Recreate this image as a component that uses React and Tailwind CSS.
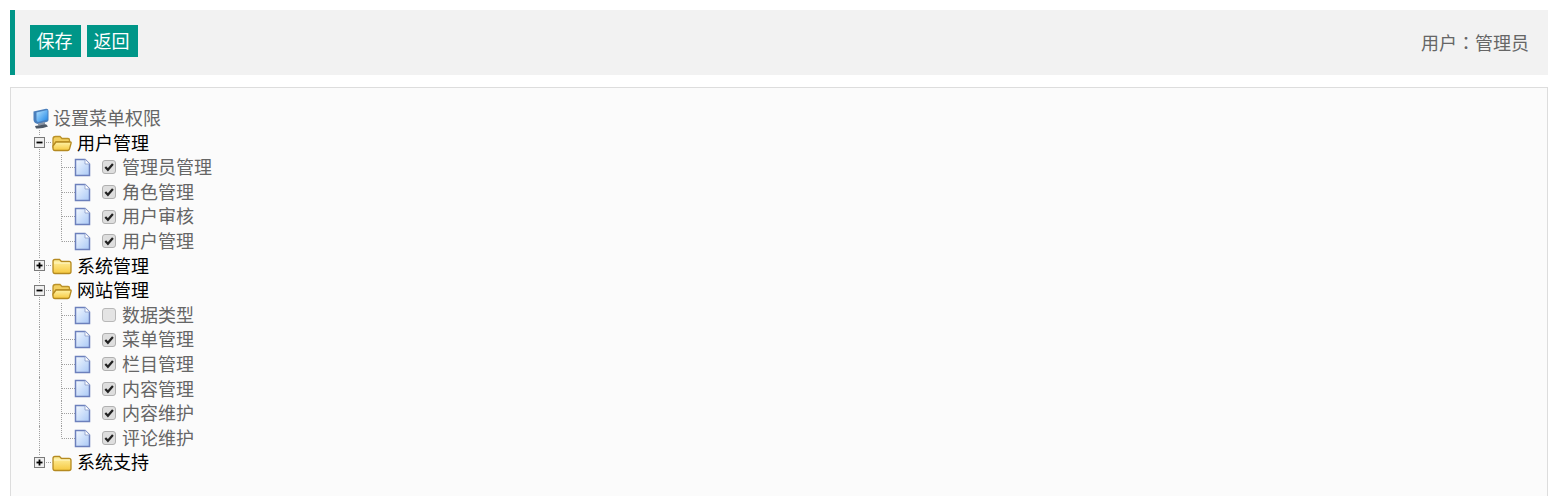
import React from "react";

const tree = [
  {
    name: "用户管理",
    open: true,
    items: [
      ["管理员管理", true],
      ["角色管理", true],
      ["用户审核", true],
      ["用户管理", true],
    ],
  },
  { name: "系统管理", open: false, items: [] },
  {
    name: "网站管理",
    open: true,
    items: [
      ["数据类型", false],
      ["菜单管理", true],
      ["栏目管理", true],
      ["内容管理", true],
      ["内容维护", true],
      ["评论维护", true],
    ],
  },
  { name: "系统支持", open: false, items: [] },
];

const DOT = "#a0a0a0";

function RootIcon() {
  return (
    <svg width="16" height="21" viewBox="0 0 16 21" className="shrink-0">
      <defs>
        <linearGradient id="screen" x1="0" y1="0" x2="1" y2="1">
          <stop offset="0" stopColor="#b4e2ff" />
          <stop offset="1" stopColor="#1f86e6" />
        </linearGradient>
      </defs>
      <path d="M0.5 3.5 L13 0.8 Q15.5 0.5 15.5 3 L15.5 12 Q15.5 13.5 13.5 14 L5 16 Q1 15.5 0.5 12Z" fill="#4a7fbc" />
      <path d="M3.5 4.5 L14.5 2 L14.5 11.5 L5 14 Q3.5 13.5 3.5 12Z" fill="url(#screen)" />
      <path d="M5 15.5 L12 14 L12 17 L5 17.5Z" fill="#8995a6" />
      <path d="M2 18 L13 16.3 L15 18.5 Q9 21 3 20.5 Z" fill="#4d5866" />
    </svg>
  );
}

function Switch({ open, last }) {
  return (
    <svg width="18" height="25" viewBox="0 0 18 25" className="shrink-0">
      <path d="M6.5 0V6" stroke={DOT} strokeDasharray="1 1" fill="none" />
      {!last && <path d="M6.5 19V25" stroke={DOT} strokeDasharray="1 1" fill="none" />}
      <path d="M13 12.5H18" stroke={DOT} strokeDasharray="1 1" fill="none" />
      <rect x="1.5" y="7.5" width="10" height="10" fill="#efefef" stroke="#7a7a7a" />
      <path d="M3.5 12.5H9.5" stroke="#000" strokeWidth="1.8" />
      {!open && <path d="M6.5 9.5V15.5" stroke="#000" strokeWidth="1.8" />}
    </svg>
  );
}

function Folder({ open, id }) {
  return (
    <svg width="21" height="19" viewBox="0 0 21 19" className="shrink-0">
      <defs>
        <linearGradient id={`f${id}`} x1="0" y1="0" x2="0" y2="1">
          <stop offset="0" stopColor="#fff3a8" />
          <stop offset="1" stopColor="#f6c83e" />
        </linearGradient>
      </defs>
      {open ? (
        <>
          <path d="M2 6 Q2 3.5 4.5 3.5 L9 3.5 L11 5.5 L17 5.5 Q18.5 5.5 18.5 7 L18.5 9 L5 9 L2 13Z" fill="#f2cf60" stroke="#bb9228" strokeWidth="1.3" />
          <path d="M5 9 H19.5 Q20.5 9 20 10.5 L18.5 16 Q18 17.5 16.5 17.5 H4 Q2 17.5 2 15.5 L2 13 Z" fill={`url(#f${id})`} stroke="#b58a20" strokeWidth="1.3" />
        </>
      ) : (
        <>
          <path d="M2 5.5 Q2 3.5 4 3.5 L8.5 3.5 L10.5 5.5 L18 5.5 Q20 5.5 20 7.5 L20 15.5 Q20 17.5 18 17.5 L4 17.5 Q2 17.5 2 15.5Z" fill={`url(#f${id})`} stroke="#b58a20" strokeWidth="1.3" />
          <path d="M3 7 H19" stroke="#fff8c8" />
        </>
      )}
    </svg>
  );
}

function Leaf({ last, id }) {
  return (
    <svg width="30" height="25" viewBox="0 0 30 25" className="shrink-0">
      <defs>
        <linearGradient id={`p${id}`} x1="0" y1="0" x2="1" y2="1">
          <stop offset="0" stopColor="#f4f9ff" />
          <stop offset="1" stopColor="#a9c8f6" />
        </linearGradient>
      </defs>
      <path d={last ? "M0.5 0V12.5" : "M0.5 0V25"} stroke={DOT} strokeDasharray="1 1" fill="none" />
      <path d="M1 12.5H14" stroke={DOT} strokeDasharray="1 1" fill="none" />
      <path d="M14.5 4.5H24L28.5 9V20.5H14.5Z" fill={`url(#p${id})`} stroke="#6c80bc" strokeWidth="1.5" />
      <path d="M24 4.5V9H28.5" fill="#fff" stroke="#9aaad2" />
    </svg>
  );
}

function Check({ on }) {
  return (
    <span
      className={`flex h-[14px] w-[14px] shrink-0 items-center justify-center rounded-[3px] border ${
        on ? "border-[#b0b0b0] bg-[#dedede]" : "border-[#b8b8b8] bg-[#e4e4e4]"
      }`}
    >
      {on && (
        <svg width="10" height="10" viewBox="0 0 10 10">
          <path d="M1.3 5 L3.9 7.8 L8.9 2" fill="none" stroke="#222222" strokeWidth="2.2" />
        </svg>
      )}
    </span>
  );
}

export default function App() {
  return (
    <div
      className="h-screen overflow-hidden bg-white pb-0 pl-[10px] pr-[14px] pt-[10px]"
      style={{ fontFamily: '"Noto Sans CJK SC", "Liberation Sans", sans-serif' }}
    >
      <div className="flex h-[65px] items-center justify-between border-l-[5px] border-[#009688] bg-[#f2f2f2] pl-[15px] pr-[19px]">
        <div className="mb-[3px] flex gap-[6px]">
          <button className="h-[32px] w-[51px] bg-[#009688] pb-[2px] pr-[2px] text-[18px] text-white">保存</button>
          <button className="h-[32px] w-[51px] bg-[#009688] pb-[2px] pr-[2px] text-[18px] text-white">返回</button>
        </div>
        <span className="mb-[1px] text-[18px] text-[#666666]">
          用户<span className="font-['Noto_Sans_CJK_TC']">：</span>管理员
        </span>
      </div>

      <div className="mt-[12px] border border-[#dddddd] bg-[#fbfbfb] pb-[30px] pl-[22px] pt-[18px] text-[18px]">
        <div className="flex h-[24.6px] items-center gap-[4px] text-[#666666]">
          <RootIcon />
          <span className="mb-[1.6px]">设置菜单权限</span>
        </div>
        {tree.map((group, i) => (
          <div key={group.name}>
            <div className="flex h-[24.6px] items-center text-black">
              <Switch open={group.open} last={i === tree.length - 1} />
              <Folder open={group.open} id={i} />
              <span className="mb-[1.6px] ml-[5px]">{group.name}</span>
            </div>
            {group.items.map(([label, on], j) => (
              <div key={label} className="flex h-[24.6px] items-center text-[#666666]">
                <span className="ml-[6px] h-full w-[22px] shrink-0 border-l border-dotted border-[#a0a0a0]" />
                <Leaf last={j === group.items.length - 1} id={`${i}-${j}`} />
                <span className="ml-[11px]">
                  <Check on={on} />
                </span>
                <span className="mb-[1.6px] ml-[6px]">{label}</span>
              </div>
            ))}
          </div>
        ))}
      </div>
    </div>
  );
}
